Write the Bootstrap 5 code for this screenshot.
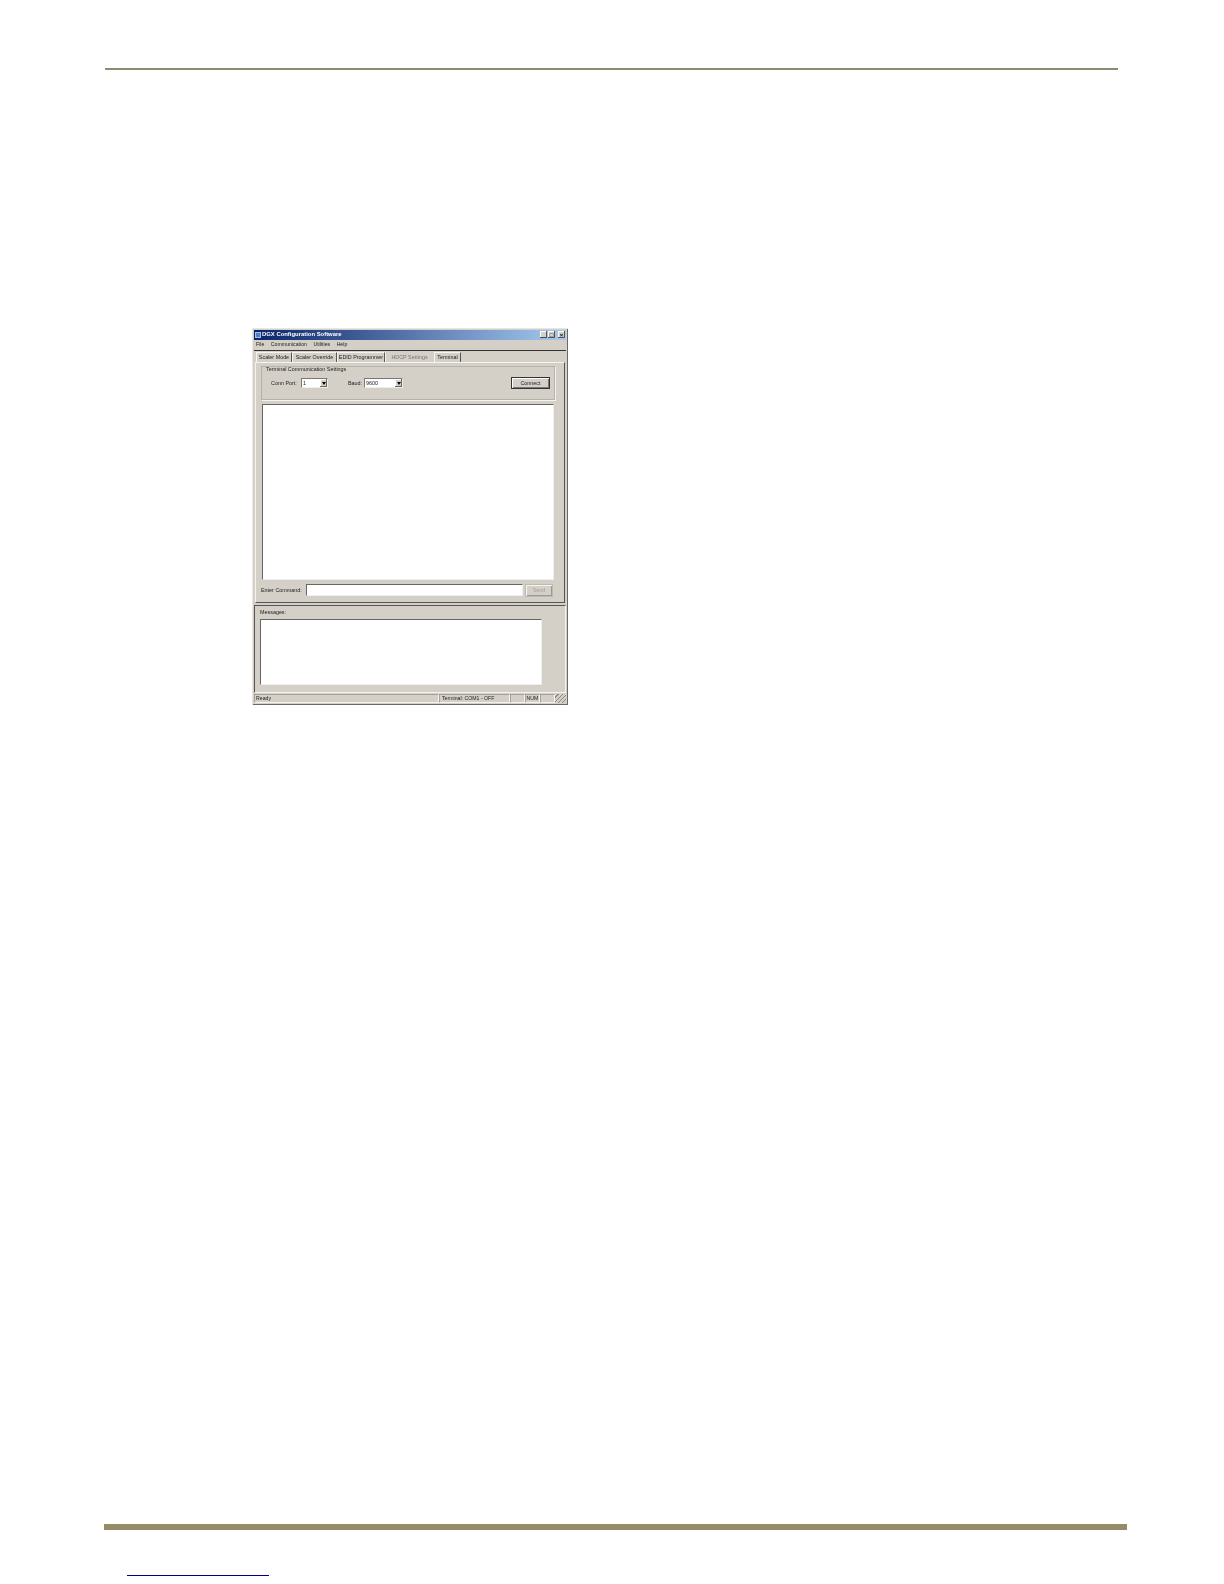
<!DOCTYPE html>
<html lang="en">
<head>
<meta charset="utf-8">
<title>DGX Configuration Software</title>
<link href="https://cdn.jsdelivr.net/npm/bootstrap@5.3.0/dist/css/bootstrap.min.css" rel="stylesheet">
<style>
html,body{margin:0;background:#fff;}
.sheet{width:1224px;height:1584px;overflow:hidden;}
.top-rule{height:2px;margin:68px 0 0 105px;width:1013px;background:#8c8a72;}
.foot-bar{height:6px;margin-left:104px;width:1023px;background:#958b69;}
.foot-link{display:block;height:1px;margin:45px 0 8px 127px;width:142px;background:#00008b;}
.win{margin:258px 0 0 252px;width:316px;height:377px;background:#d4d0c8;color:#1c1c1c;font:5.4px/1 "Liberation Sans",sans-serif;box-shadow:inset 1px 1px 0 #e8e6e0,inset -1px -1px 0 #6a6a66;padding:2px;filter:blur(.45px);}
.win-title{height:10px;background:linear-gradient(90deg,#0a246a,#a6caf0);color:#fff;font-size:5.9px;font-weight:700;padding:0 1px;gap:1px;}
.win-ctl{width:7px;height:7px;background:#d4d0c8;box-shadow:inset -1px -1px 0 #555,inset 1px 1px 0 #fff;color:#000;font-size:6px;font-weight:700;}
.win-menu{height:11px;padding:0 2px;gap:6.5px;border-bottom:1px solid #333;font-size:5.2px;}
.win-tabs{height:11px;padding:1px 0 0 2px;}
.win-tab{height:10px;border:1px solid #f4f3ef;border-bottom:0;border-right-color:#555;}
.tw1{width:36px;}.tw2{width:45px;}.tw3{width:48px;}.tw4{width:49px;}.tw5{width:27px;}
.tab-dim{color:#777;border-color:transparent #f4f3ef transparent #f4f3ef;border-right-color:#d4d0c8;}
.win-panel{height:243px;margin:0 1px;padding:3px 9px 0 5px;border:1px solid #f4f3ef;border-right-color:#555;border-bottom-color:#555;}
.group-box{height:34px;border:1px solid #b5b2aa;box-shadow:1px 1px 0 #f4f3ef;padding:0 4px 0 2px;}
.group-legend{background:#d4d0c8;padding:0 1px;margin:0 0 0 1px;width:fit-content;}
.group-row{margin-top:5px;margin-left:7px;}
.port-lbl{width:29px;margin-right:1px;}
.baud-lbl{width:15px;margin:0 1px 0 20px;}
.combo{height:10px;background:#fff;border:1px solid #777;border-right-color:#eee;border-bottom-color:#eee;padding-left:1px;}
.combo-a{width:27px;}.combo-b{width:39px;}
.combo-arrow{width:7px;height:8px;background:#d4d0c8;box-shadow:inset -1px -1px 0 #666,inset 1px 1px 0 #fff;}
.combo-arrow::after{content:"";border:2px solid transparent;border-top:3px solid #000;border-bottom:0;}
.push-btn{width:39px;height:12px;background:#d4d0c8;border:1px solid #333;box-shadow:inset 1px 1px 0 #fff,inset -1px -1px 0 #777;font-size:5.4px;color:#222;padding:0;border-radius:0;}
.push-off{width:28px;height:13px;color:#a5a29b;border-color:#bdbab2;box-shadow:inset 1px 1px 0 #f4f3ef,inset -1px -1px 0 #999;}
.well-box{background:#fff;border:1px solid #666;border-right-color:#eee;border-bottom-color:#eee;}
.term-out{height:176px;margin:4px 1px 0 1px;}
.cmd-row{height:17px;margin-top:2px;}
.cmd-lbl{width:41px;margin-right:4px;white-space:nowrap;}
.cmd-in{width:217px;height:12px;margin-right:2px;}
.msg-pane{height:88px;margin:2px 0 0;padding:4px 5px;border:1px solid #555;border-right-color:#f4f3ef;border-bottom-color:#f4f3ef;}
.msg-box{width:282px;height:66px;margin-top:3px;}
.stat-bar{height:9px;margin-top:1px;font-size:5.2px;}
.stat-cell{height:9px;border:1px solid #a5a29b;border-right-color:#f4f3ef;border-bottom-color:#f4f3ef;padding:0 1px;}
.c1{flex:1 1 auto;}.c2{width:71px;padding-left:2px;}.c3{width:15px;}.c4{width:15px;justify-content:center;}.c5{width:15px;}
.grip{width:11px;background:repeating-linear-gradient(135deg,#d4d0c8 0 2px,#888 2px 3px);}
.ctl-gap{margin-left:2px;}
</style>
</head>
<body>
<div class="sheet d-flex flex-column">
  <div class="top-rule"></div>
  <div class="win d-flex flex-column">
    <div class="win-title d-flex align-items-center">
      <svg width="6" height="6" viewBox="0 0 6 6"><rect width="6" height="6" fill="#9cc4ee"/><path d="M1 2h4M1 4h4" stroke="#123a8c"/></svg>
      <span class="flex-grow-1">DGX Configuration Software</span>
      <span class="win-ctl d-flex align-items-end justify-content-center">_</span>
      <span class="win-ctl d-flex align-items-center justify-content-center">□</span>
      <span class="win-ctl ctl-gap d-flex align-items-center justify-content-center">×</span>
    </div>
    <div class="win-menu d-flex align-items-center"><span>File</span><span>Communication</span><span>Utilities</span><span>Help</span></div>
    <div class="win-tabs d-flex">
      <div class="win-tab tw1 d-flex align-items-center justify-content-center">Scaler Mode</div>
      <div class="win-tab tw2 d-flex align-items-center justify-content-center">Scaler Override</div>
      <div class="win-tab tw3 d-flex align-items-center justify-content-center">EDID Programmer</div>
      <div class="win-tab tw4 tab-dim d-flex align-items-center justify-content-center">HDCP Settings</div>
      <div class="win-tab tw5 d-flex align-items-center justify-content-center">Terminal</div>
    </div>
    <div class="win-panel">
      <div class="group-box">
        <div class="group-legend">Terminal Communication Settings</div>
        <div class="group-row d-flex align-items-center">
          <span class="port-lbl">Conn Port:</span>
          <div class="combo combo-a d-flex align-items-center justify-content-between"><span>1</span><span class="combo-arrow d-flex align-items-center justify-content-center"></span></div>
          <span class="baud-lbl">Baud:</span>
          <div class="combo combo-b d-flex align-items-center justify-content-between"><span>9600</span><span class="combo-arrow d-flex align-items-center justify-content-center"></span></div>
          <button class="btn push-btn ms-auto" type="button">Connect</button>
        </div>
      </div>
      <div class="well-box term-out"></div>
      <div class="cmd-row d-flex align-items-center">
        <span class="cmd-lbl">Enter Command:</span>
        <div class="well-box cmd-in"></div>
        <button class="btn push-btn push-off" type="button">Send</button>
      </div>
    </div>
    <div class="msg-pane">
      <div>Messages:</div>
      <div class="well-box msg-box"></div>
    </div>
    <div class="stat-bar d-flex">
      <div class="stat-cell c1 d-flex align-items-center">Ready</div>
      <div class="stat-cell c2 d-flex align-items-center">Terminal: COM1 - OFF</div>
      <div class="stat-cell c3"></div>
      <div class="stat-cell c4 d-flex align-items-center">NUM</div>
      <div class="stat-cell c5"></div>
      <div class="grip"></div>
    </div>
  </div>
  <div class="foot-bar mt-auto"></div>
  <a class="foot-link" href="#" aria-label="link"></a>
</div>
<script src="https://cdn.jsdelivr.net/npm/bootstrap@5.3.0/dist/js/bootstrap.bundle.min.js"></script>
</body>
</html>
